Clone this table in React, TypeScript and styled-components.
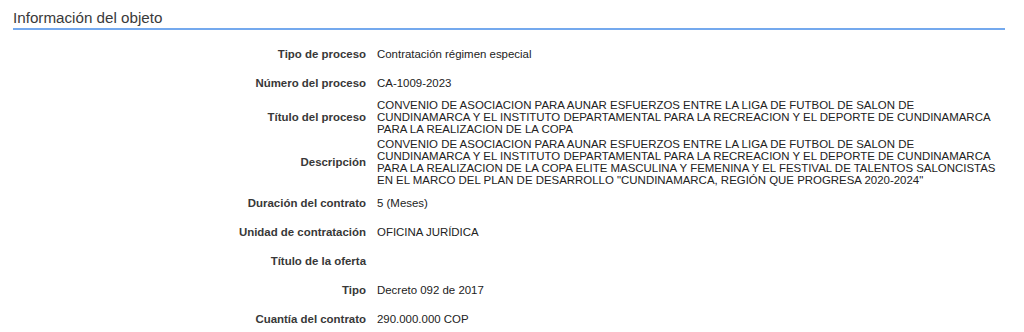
import React from 'react'
import styled, { createGlobalStyle } from 'styled-components'

const GlobalStyle = createGlobalStyle`
	body {
		margin: 0;
		background: #ffffff;
		font-family: 'Liberation Sans', Arial, sans-serif;
	}
`

const rows: { label: string; value: string }[] = [
	{ label: 'Tipo de proceso', value: 'Contratación régimen especial' },
	{ label: 'Número del proceso', value: 'CA-1009-2023' },
	{
		label: 'Título del proceso',
		value:
			'CONVENIO DE ASOCIACION PARA AUNAR ESFUERZOS ENTRE LA LIGA DE FUTBOL DE SALON DE CUNDINAMARCA Y EL INSTITUTO DEPARTAMENTAL PARA LA RECREACION Y EL DEPORTE DE CUNDINAMARCA PARA LA REALIZACION DE LA COPA',
	},
	{
		label: 'Descripción',
		value:
			'CONVENIO DE ASOCIACION PARA AUNAR ESFUERZOS ENTRE LA LIGA DE FUTBOL DE SALON DE CUNDINAMARCA Y EL INSTITUTO DEPARTAMENTAL PARA LA RECREACION Y EL DEPORTE DE CUNDINAMARCA PARA LA REALIZACION DE LA COPA ELITE MASCULINA Y FEMENINA Y EL FESTIVAL DE TALENTOS SALONCISTAS EN EL MARCO DEL PLAN DE DESARROLLO "CUNDINAMARCA, REGIÓN QUE PROGRESA 2020-2024"',
	},
	{ label: 'Duración del contrato', value: '5 (Meses)' },
	{ label: 'Unidad de contratación', value: 'OFICINA JURÍDICA' },
	{ label: 'Título de la oferta', value: '' },
	{ label: 'Tipo', value: 'Decreto 092 de 2017' },
	{ label: 'Cuantía del contrato', value: '290.000.000 COP' },
]

export default function App() {
	return (
		<>
			<GlobalStyle />
			<ObjectInfoContainer>
				<ObjectInfoTitle>Información del objeto</ObjectInfoTitle>
				<ObjectInfoList>
					{rows.map((row) => (
						<ObjectInfoRow key={row.label}>
							<ObjectInfoLabel>{row.label}</ObjectInfoLabel>
							<ObjectInfoValue>{row.value}</ObjectInfoValue>
						</ObjectInfoRow>
					))}
				</ObjectInfoList>
			</ObjectInfoContainer>
		</>
	)
}

const ObjectInfoContainer = styled.div`
	padding: 9px 19px 0 13px;
`

const ObjectInfoTitle = styled.div`
	font-size: 15.2px;
	line-height: 18px;
	color: #3a3a3a;
	padding-bottom: 1px;
	border-bottom: 2px solid #74a9ee;
`

const ObjectInfoList = styled.div`
	display: grid;
	padding-top: 9px;
`

const ObjectInfoRow = styled.div`
	display: grid;
	grid-template-columns: 353px 628px;
	column-gap: 11px;
	align-items: center;
	min-height: 29px;
	padding: 1.75px 0;
	box-sizing: border-box;
	font-size: 11.45px;
	line-height: 12px;
`

const ObjectInfoLabel = styled.div`
	text-align: right;
	font-weight: bold;
	color: #383838;
`

const ObjectInfoValue = styled.div`
	color: #222222;
`
